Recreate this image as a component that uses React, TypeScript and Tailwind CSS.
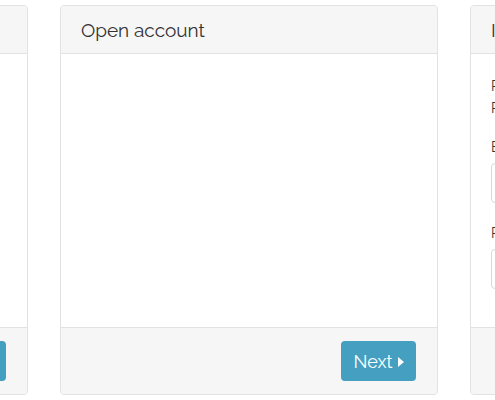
import React from 'react';

const font = { fontFamily: 'Raleway, Lato, "Open Sans", sans-serif' };

const NextButton: React.FC = () => (
  <button
    type="button"
    className="flex h-[40px] w-[75px] items-center justify-center gap-[5px] rounded-[4px] bg-[#449fc0] text-[18px] text-white"
  >
    <span>Next</span>
    <svg width="6" height="10" viewBox="0 0 6 10" className="mt-[1px]">
      <path d="M0 0 L6 5 L0 10 Z" fill="white" />
    </svg>
  </button>
);

interface PanelProps {
  title: string;
  children?: React.ReactNode;
  footer?: React.ReactNode;
}

const Panel: React.FC<PanelProps> = ({ title, children, footer }) => (
  <div className="flex h-[390px] w-[378px] shrink-0 flex-col rounded-[4px] border border-[#e2e2e2] bg-white">
    <div className="flex h-[48px] shrink-0 items-center rounded-t-[4px] border-b border-[#e2e2e2] bg-[#f6f6f6] px-5 pt-[2px] text-[19px] text-[#333]">
      {title}
    </div>
    <div className="flex-1 px-5 pt-[21px]">{children}</div>
    <div className="flex h-[67px] shrink-0 items-center justify-end rounded-b-[4px] border-t border-[#e2e2e2] bg-[#f6f6f6] pl-5 pr-[21px]">
      {footer}
    </div>
  </div>
);

const Field: React.FC<{ label: string; type?: string }> = ({ label, type = 'text' }) => (
  <div className="mb-[20px]">
    <label className="mb-[6px] block text-[14px] leading-5 text-[#333]">{label}</label>
    <input
      type={type}
      className="block h-[40px] w-full rounded-[4px] border border-[#d9d9d9] px-3"
    />
  </div>
);

const App: React.FC = () => {
  return (
    <div className="h-[400px] w-full overflow-hidden bg-white pt-[5px]" style={font}>
      <div className="ml-[-350px] flex gap-8">
        <Panel title="Your details" footer={<NextButton />} />
        <Panel title="Open account" footer={<NextButton />} />
        <Panel title="Identify yourself" footer={<NextButton />}>
          <p className="mb-[18px] text-[14px] leading-[22px] text-[#333]">
            Please enter your email address and password.
            <br />
            Press Next when you are done.
          </p>
          <Field label="Email" type="email" />
          <Field label="Password" type="password" />
        </Panel>
      </div>
    </div>
  );
};

export default App;
